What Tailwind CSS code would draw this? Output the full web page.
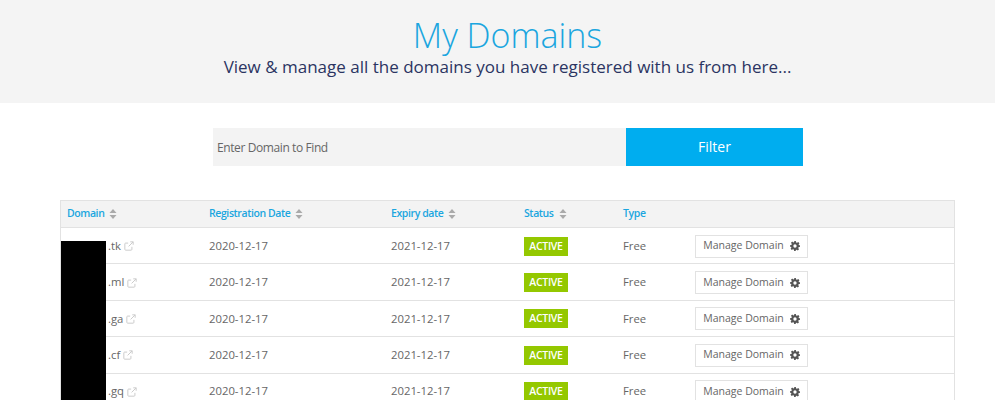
<!DOCTYPE html>
<html lang="en">
<head>
    <meta charset="UTF-8">
    <title>My Domains</title>
    <script src="https://cdn.jsdelivr.net/npm/@tailwindcss/browser@4"></script>
</head>
<body class="bg-white font-['Open_Sans',sans-serif] h-[400px] overflow-hidden relative">
    <!-- Header -->
    <div class="bg-[#f4f4f4] h-[103px] text-center pt-[13px] pl-[20px]">
        <h1 class="text-[34px] leading-[44px] font-light text-[#1ba6df]">My Domains</h1>
        <p class="text-[17px] leading-[24px] text-[#2b3462] -mt-[2.500px]">View &amp; manage all the domains you have registered with us from here...</p>
    </div>

    <!-- Filter -->
    <div class="flex ml-[213px] mt-[25px] w-[590px] h-[38px]">
        <div class="w-[413px] bg-[#f3f3f3] pl-[4px] pt-[1px] flex items-center text-[12px] tracking-[-0.4px] text-[#666]">Enter Domain to Find</div>
        <button class="w-[177px] bg-[#00adef] text-white text-[14px] font-medium pb-[1px]">Filter</button>
    </div>

    <!-- Table -->
    <div class="ml-[60px] mr-[40px] mt-[34px] border-x border-[#e2e2e2]">
        <div class="flex items-center h-[28px] bg-[#f3f3f3] border-y border-[#e2e2e2] text-[10.500px] tracking-[-0.4px] font-semibold text-[#1ba6df]">
            <div class="w-[148px] pl-[6px] flex items-center gap-[5px]">Domain
                <svg width="8" height="10" viewBox="0 0 8 10" fill="#aaa"><path d="M4 0l3.500 4h-7zM4 10L.5 6h7z"/></svg>
            </div>
            <div class="w-[182px] flex items-center gap-[5px]">Registration Date
                <svg width="8" height="10" viewBox="0 0 8 10" fill="#aaa"><path d="M4 0l3.500 4h-7zM4 10L.5 6h7z"/></svg>
            </div>
            <div class="w-[133px] flex items-center gap-[5px]">Expiry date
                <svg width="8" height="10" viewBox="0 0 8 10" fill="#aaa"><path d="M4 0l3.500 4h-7zM4 10L.5 6h7z"/></svg>
            </div>
            <div class="w-[99px] flex items-center gap-[5px]">Status
                <svg width="8" height="10" viewBox="0 0 8 10" fill="#aaa"><path d="M4 0l3.500 4h-7zM4 10L.5 6h7z"/></svg>
            </div>
            <div>Type</div>
        </div>

        <div class="flex items-center h-[36.400px] pt-[1px] border-b border-[#e2e2e2] text-[11.300px] text-[#666]">
            <div class="w-[148px] pl-[47px] flex items-center gap-[3px]">.tk
                <svg width="10" height="10" viewBox="0 0 12 12" fill="none" stroke="#ccc" stroke-width="1.2"><path d="M9.500 7v3a1 1 0 0 1-1 1H2a1 1 0 0 1-1-1V3.500a1 1 0 0 1 1-1h3M7.500 1H11v3.500M11 1L5.500 6.500"/></svg>
            </div>
            <div class="w-[182px]">2020-12-17</div>
            <div class="w-[133px]">2021-12-17</div>
            <div class="w-[99px]"><span class="block bg-[#94c800] text-white text-[10.500px] tracking-[-0.3px] font-semibold leading-[19px] w-[44px] text-center">ACTIVE</span></div>
            <div class="w-[72px]">Free</div>
            <div class="w-[113px] h-[23px] border border-[#e2e2e2] flex items-center justify-center gap-[6px] text-[10.500px] text-[#666]">Manage Domain
                <svg width="10" height="10" viewBox="0 0 24 24" fill="#555"><path fill-rule="evenodd" d="M10 0h4l.7 3.400 2.200.9 2.900-1.900 2.800 2.800-1.900 2.900.9 2.200L24 10v4l-3.400.7-.9 2.200 1.900 2.900-2.800 2.800-2.900-1.900-2.200.9L14 24h-4l-.7-3.400-2.200-.9-2.900 1.900-2.800-2.800 1.900-2.900-.9-2.200L0 14v-4l3.400-.7.9-2.200-1.900-2.900 2.800-2.800 2.900 1.900 2.200-.9zM12 8a4 4 0 1 0 0 8 4 4 0 0 0 0-8z"/></svg>
            </div>
        </div>

        <div class="flex items-center h-[36.400px] pt-[1px] border-b border-[#e2e2e2] text-[11.300px] text-[#666]">
            <div class="w-[148px] pl-[47px] flex items-center gap-[3px]">.ml
                <svg width="10" height="10" viewBox="0 0 12 12" fill="none" stroke="#ccc" stroke-width="1.2"><path d="M9.500 7v3a1 1 0 0 1-1 1H2a1 1 0 0 1-1-1V3.500a1 1 0 0 1 1-1h3M7.500 1H11v3.500M11 1L5.500 6.500"/></svg>
            </div>
            <div class="w-[182px]">2020-12-17</div>
            <div class="w-[133px]">2021-12-17</div>
            <div class="w-[99px]"><span class="block bg-[#94c800] text-white text-[10.500px] tracking-[-0.3px] font-semibold leading-[19px] w-[44px] text-center">ACTIVE</span></div>
            <div class="w-[72px]">Free</div>
            <div class="w-[113px] h-[23px] border border-[#e2e2e2] flex items-center justify-center gap-[6px] text-[10.500px] text-[#666]">Manage Domain
                <svg width="10" height="10" viewBox="0 0 24 24" fill="#555"><path fill-rule="evenodd" d="M10 0h4l.7 3.400 2.200.9 2.900-1.900 2.800 2.800-1.900 2.900.9 2.200L24 10v4l-3.400.7-.9 2.200 1.900 2.900-2.800 2.800-2.900-1.900-2.200.9L14 24h-4l-.7-3.400-2.200-.9-2.900 1.900-2.800-2.800 1.900-2.900-.9-2.200L0 14v-4l3.400-.7.9-2.200-1.900-2.900 2.800-2.800 2.900 1.900 2.200-.9zM12 8a4 4 0 1 0 0 8 4 4 0 0 0 0-8z"/></svg>
            </div>
        </div>

        <div class="flex items-center h-[36.400px] pt-[1px] border-b border-[#e2e2e2] text-[11.300px] text-[#666]">
            <div class="w-[148px] pl-[47px] flex items-center gap-[3px]">.ga
                <svg width="10" height="10" viewBox="0 0 12 12" fill="none" stroke="#ccc" stroke-width="1.2"><path d="M9.500 7v3a1 1 0 0 1-1 1H2a1 1 0 0 1-1-1V3.500a1 1 0 0 1 1-1h3M7.500 1H11v3.500M11 1L5.500 6.500"/></svg>
            </div>
            <div class="w-[182px]">2020-12-17</div>
            <div class="w-[133px]">2021-12-17</div>
            <div class="w-[99px]"><span class="block bg-[#94c800] text-white text-[10.500px] tracking-[-0.3px] font-semibold leading-[19px] w-[44px] text-center">ACTIVE</span></div>
            <div class="w-[72px]">Free</div>
            <div class="w-[113px] h-[23px] border border-[#e2e2e2] flex items-center justify-center gap-[6px] text-[10.500px] text-[#666]">Manage Domain
                <svg width="10" height="10" viewBox="0 0 24 24" fill="#555"><path fill-rule="evenodd" d="M10 0h4l.7 3.400 2.200.9 2.900-1.900 2.800 2.800-1.900 2.900.9 2.200L24 10v4l-3.400.7-.9 2.200 1.900 2.900-2.800 2.800-2.900-1.900-2.200.9L14 24h-4l-.7-3.400-2.200-.9-2.900 1.900-2.800-2.800 1.900-2.900-.9-2.200L0 14v-4l3.400-.7.9-2.200-1.900-2.900 2.800-2.800 2.900 1.900 2.200-.9zM12 8a4 4 0 1 0 0 8 4 4 0 0 0 0-8z"/></svg>
            </div>
        </div>

        <div class="flex items-center h-[36.400px] pt-[1px] border-b border-[#e2e2e2] text-[11.300px] text-[#666]">
            <div class="w-[148px] pl-[47px] flex items-center gap-[3px]">.cf
                <svg width="10" height="10" viewBox="0 0 12 12" fill="none" stroke="#ccc" stroke-width="1.2"><path d="M9.500 7v3a1 1 0 0 1-1 1H2a1 1 0 0 1-1-1V3.500a1 1 0 0 1 1-1h3M7.500 1H11v3.500M11 1L5.500 6.500"/></svg>
            </div>
            <div class="w-[182px]">2020-12-17</div>
            <div class="w-[133px]">2021-12-17</div>
            <div class="w-[99px]"><span class="block bg-[#94c800] text-white text-[10.500px] tracking-[-0.3px] font-semibold leading-[19px] w-[44px] text-center">ACTIVE</span></div>
            <div class="w-[72px]">Free</div>
            <div class="w-[113px] h-[23px] border border-[#e2e2e2] flex items-center justify-center gap-[6px] text-[10.500px] text-[#666]">Manage Domain
                <svg width="10" height="10" viewBox="0 0 24 24" fill="#555"><path fill-rule="evenodd" d="M10 0h4l.7 3.400 2.200.9 2.900-1.900 2.800 2.800-1.900 2.900.9 2.200L24 10v4l-3.400.7-.9 2.200 1.900 2.900-2.800 2.800-2.900-1.900-2.200.9L14 24h-4l-.7-3.400-2.200-.9-2.900 1.900-2.800-2.800 1.900-2.900-.9-2.200L0 14v-4l3.400-.7.9-2.200-1.900-2.900 2.800-2.800 2.900 1.900 2.200-.9zM12 8a4 4 0 1 0 0 8 4 4 0 0 0 0-8z"/></svg>
            </div>
        </div>

        <div class="flex items-center h-[36.400px] pt-[1px] border-b border-[#e2e2e2] text-[11.300px] text-[#666]">
            <div class="w-[148px] pl-[47px] flex items-center gap-[3px]">.gq
                <svg width="10" height="10" viewBox="0 0 12 12" fill="none" stroke="#ccc" stroke-width="1.2"><path d="M9.500 7v3a1 1 0 0 1-1 1H2a1 1 0 0 1-1-1V3.500a1 1 0 0 1 1-1h3M7.500 1H11v3.500M11 1L5.500 6.500"/></svg>
            </div>
            <div class="w-[182px]">2020-12-17</div>
            <div class="w-[133px]">2021-12-17</div>
            <div class="w-[99px]"><span class="block bg-[#94c800] text-white text-[10.500px] tracking-[-0.3px] font-semibold leading-[19px] w-[44px] text-center">ACTIVE</span></div>
            <div class="w-[72px]">Free</div>
            <div class="w-[113px] h-[23px] border border-[#e2e2e2] flex items-center justify-center gap-[6px] text-[10.500px] text-[#666]">Manage Domain
                <svg width="10" height="10" viewBox="0 0 24 24" fill="#555"><path fill-rule="evenodd" d="M10 0h4l.7 3.400 2.200.9 2.900-1.900 2.800 2.800-1.900 2.900.9 2.200L24 10v4l-3.400.7-.9 2.200 1.900 2.900-2.800 2.800-2.900-1.900-2.200.9L14 24h-4l-.7-3.400-2.200-.9-2.900 1.900-2.800-2.800 1.900-2.900-.9-2.200L0 14v-4l3.400-.7.9-2.200-1.900-2.900 2.800-2.800 2.900 1.900 2.200-.9zM12 8a4 4 0 1 0 0 8 4 4 0 0 0 0-8z"/></svg>
            </div>
        </div>
    </div>

    <!-- Redaction box lies over the domain names -->
    <div class="absolute left-[61px] top-[241px] w-[45px] h-[159px] bg-black"></div>
</body>
</html>
